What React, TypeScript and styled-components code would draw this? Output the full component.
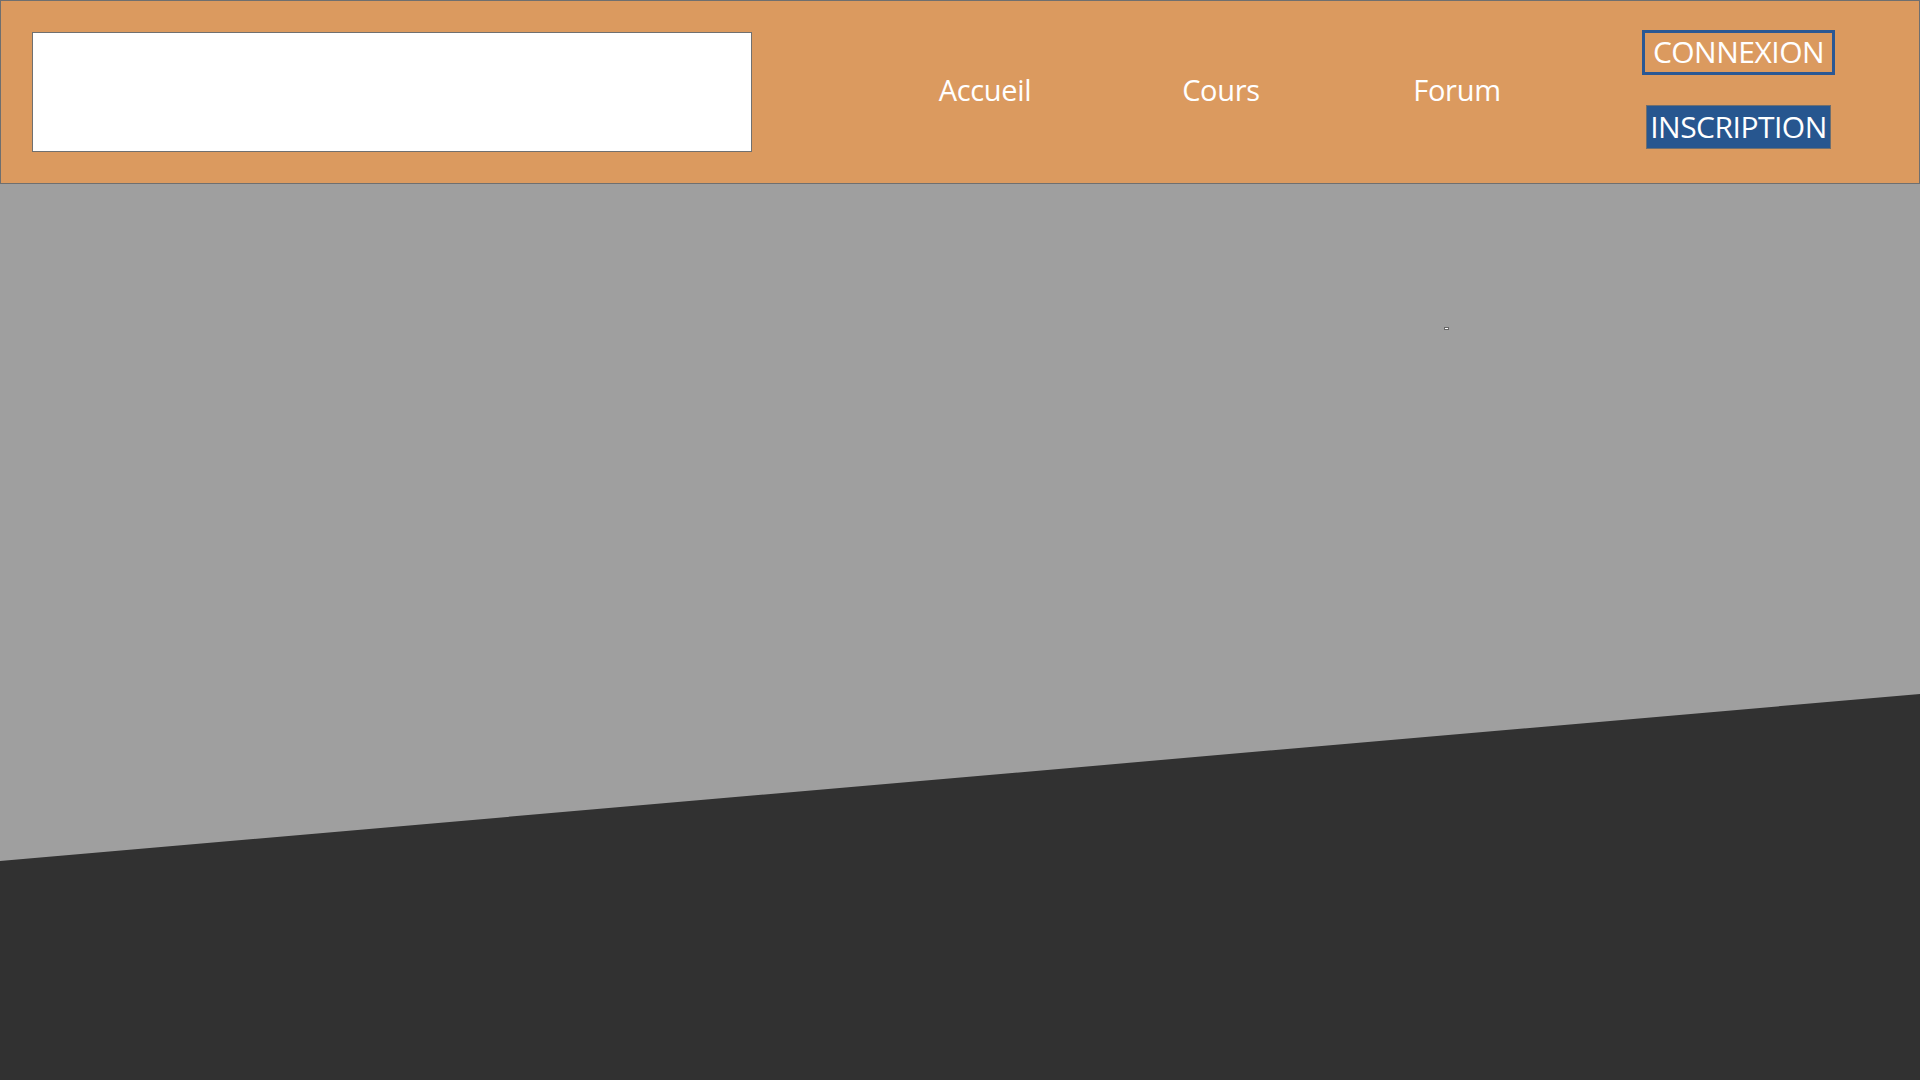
import styled, { createGlobalStyle } from 'styled-components'

const GlobalStyle = createGlobalStyle`
  html, body {
    margin: 0;
    padding: 0;
    width: 100%;
    height: 100%;
    overflow: hidden;
  }
  body {
    font-family: 'Open Sans', 'Noto Sans', sans-serif;
    background: #9e9e9e;
  }
`

const Page = styled.div`
  width: 1920px;
  height: 1080px;
  display: flex;
  flex-direction: column;
  background: #9f9f9f;
`

const Header = styled.header`
  box-sizing: border-box;
  height: 184px;
  display: flex;
  align-items: center;
  padding-left: 31px;
  background: #db9a5f;
  border: 1px solid #6f6f6f;
`

const LogoBox = styled.div`
  box-sizing: border-box;
  width: 720px;
  height: 120px;
  background: #ffffff;
  border: 1px solid #707070;
`

const Nav = styled.nav`
  display: flex;
  margin-left: 115px;
  margin-top: -6px;
`

const NavLink = styled.a`
  width: 236px;
  text-align: center;
  color: #ffffff;
  font-size: 29px;
  text-decoration: none;
  letter-spacing: -0.3px;
`

const AuthColumn = styled.div`
  display: flex;
  flex-direction: column;
  align-items: center;
  gap: 30px;
  width: 193px;
  margin-left: 67px;
  margin-bottom: 6px;
`

const AuthButton = styled.button<{ $filled?: boolean }>`
  box-sizing: border-box;
  height: ${({ $filled }) => ($filled ? '44px' : '45px')};
  width: ${({ $filled }) => ($filled ? '185px' : '193px')};
  padding: 0;
  font-family: 'Open Sans', 'Noto Sans', sans-serif;
  font-size: 30px;
  line-height: 1;
  letter-spacing: -0.5px;
  white-space: nowrap;
  color: #ffffff;
  background: ${({ $filled }) => ($filled ? '#27568f' : 'transparent')};
  border: ${({ $filled }) => ($filled ? '1px solid #6f6f6f' : '3px solid #2a5894')};
  cursor: pointer;
`

const Hero = styled.main`
  position: relative;
  flex: 1;
  display: flex;
  flex-direction: column;
  justify-content: flex-end;
  background: #9f9f9f;
`

const StrayMark = styled.span`
  position: absolute;
  left: 1444px;
  top: 143px;
  width: 5px;
  height: 3px;
  box-sizing: border-box;
  border: 1px solid #666;
  background: #fff;
`

const Slant = styled.section`
  height: 386px;
  background: #313131;
  clip-path: polygon(0 167px, 100% 0, 100% 100%, 0 100%);
`

export default function App() {
  return (
    <>
      <GlobalStyle />
      <Page>
        <Header>
          <LogoBox />
          <Nav>
            <NavLink href="#">Accueil</NavLink>
            <NavLink href="#">Cours</NavLink>
            <NavLink href="#">Forum</NavLink>
          </Nav>
          <AuthColumn>
            <AuthButton>CONNEXION</AuthButton>
            <AuthButton $filled>INSCRIPTION</AuthButton>
          </AuthColumn>
        </Header>
        <Hero>
          <StrayMark />
          <Slant />
        </Hero>
      </Page>
    </>
  )
}
